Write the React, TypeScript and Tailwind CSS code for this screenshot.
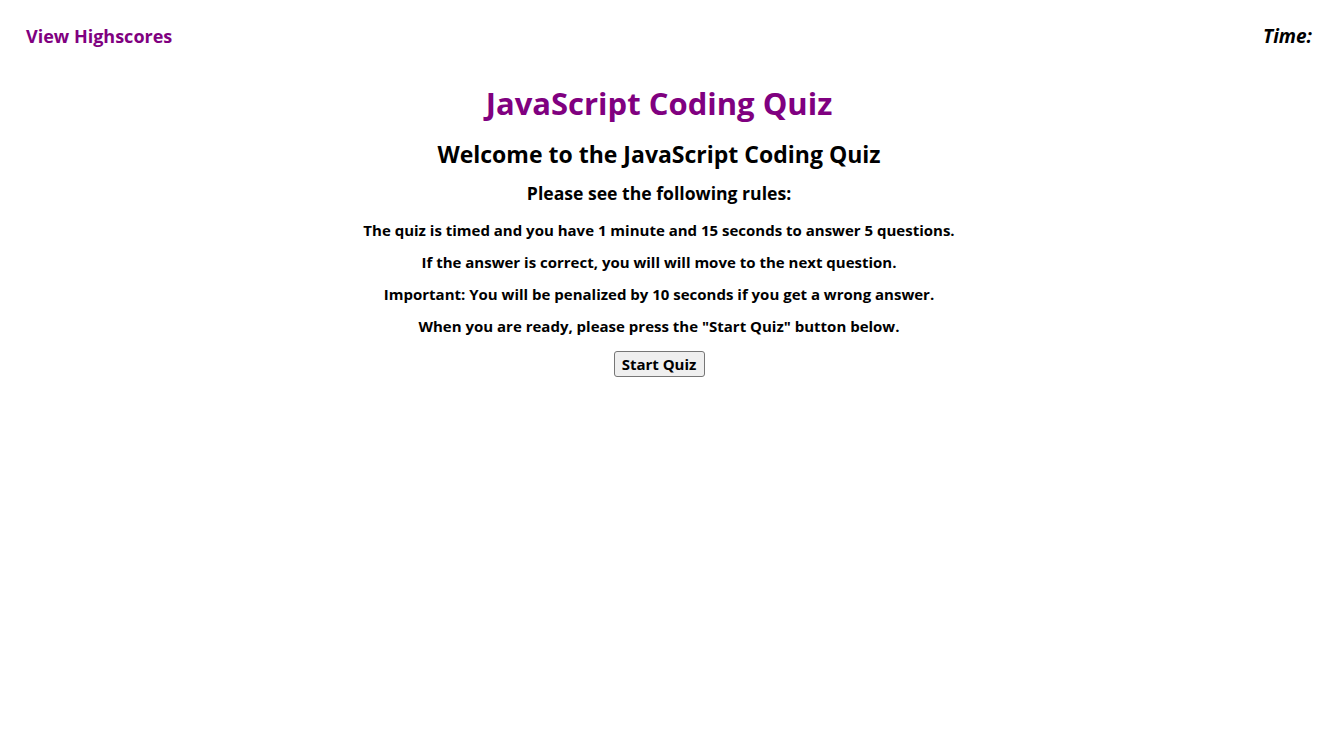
export default function App() {
  const rules = [
    "The quiz is timed and you have 1 minute and 15 seconds to answer 5 questions.",
    "If the answer is correct, you will will move to the next question.",
    "Important: You will be penalized by 10 seconds if you get a wrong answer.",
    'When you are ready, please press the "Start Quiz" button below.',
  ];

  return (
    <div className="min-h-screen bg-white text-black font-['Open_Sans',sans-serif] font-bold">
      {/* header */}
      <header className="flex h-[72px] items-center justify-between pl-[26px] pr-[6px]">
        <a href="#" className="text-[18px] leading-none text-[#800080]">
          View Highscores
        </a>
        <div className="text-[19px] leading-none italic">Time:</div>
      </header>

      {/* intro */}
      <main className="flex flex-col items-center text-center">
        <h1 className="mt-[11px] text-[31px] leading-[40px] text-[#800080]">
          JavaScript Coding Quiz
        </h1>
        <h2 className="mt-[15px] text-[23px] leading-[32px]">
          Welcome to the JavaScript Coding Quiz
        </h2>
        <h3 className="mt-[10px] text-[17.6px] leading-[26px]">
          Please see the following rules:
        </h3>
        <div className="mt-[13px] flex flex-col items-center gap-[10px]">
          {rules.map((r) => (
            <p key={r} className="text-[15px] leading-[22px]">
              {r}
            </p>
          ))}
        </div>
        <button className="mt-[14px] h-[26px] w-[91px] rounded-[3px] border border-[#767676] bg-[#efefef] text-[15px] leading-none text-black">
          Start Quiz
        </button>
      </main>
    </div>
  );
}
